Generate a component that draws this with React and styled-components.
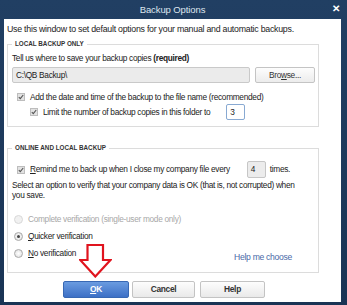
import React from 'react';
import styled, { createGlobalStyle } from 'styled-components';

const Global = createGlobalStyle`
  body {
    margin: 0;
    background: #1b3556;
    font-family: "Liberation Sans", Arial, sans-serif;
  }
`;

const Window = styled.div`
  position: relative;
  width: 347px;
  height: 305px;
  box-sizing: border-box;
  background: linear-gradient(#213f63, #1a3455);
  padding: 0 6px 3px 4px;
  display: flex;
  flex-direction: column;
`;

const TitleBar = styled.div`
  height: 19px;
  flex: none;
  display: flex;
  align-items: center;
  justify-content: center;
  position: relative;
  color: #dde5ee;
  font-size: 9.5px;
  letter-spacing: -0.1px;
`;

const Close = styled.span`
  position: absolute;
  right: 1px;
  top: 3px;
  color: #fff;
  font-weight: bold;
  font-size: 10px;
`;

const Body = styled.div`
  flex: 1;
  background: #fff;
  padding: 4px 0 0 3px;
  font-size: 8.3px;
  letter-spacing: -0.3px;
  color: #222;
`;

const Intro = styled.div`
  height: 12px;
  line-height: 12px;
  font-size: 8.8px;
  letter-spacing: -0.25px;
  white-space: nowrap;
`;

const Line = styled.div`
  height: ${p => p.h || 12}px;
  line-height: ${p => p.h || 12}px;
  display: flex;
  align-items: center;
  margin-top: ${p => p.mt || 0}px;
  padding-left: ${p => p.indent || 0}px;
  color: ${p => (p.muted ? '#a8a8a8' : '#222')};
  white-space: nowrap;
`;

const Group = styled.fieldset`
  width: 312px;
  box-sizing: border-box;
  margin: ${p => p.mt || 0}px 0 0 0;
  padding: 0 0 0 4px;
  border: 1px solid #dcdcdc;
  height: ${p => p.h}px;
`;

const Legend = styled.legend`
  font-size: 6.3px;
  font-weight: bold;
  letter-spacing: 0;
  color: #333;
  padding: 0 3px;
  margin-left: 0;
  line-height: 8px;
`;

const PathRow = styled.div`
  display: flex;
  gap: 5px;
  margin-top: 3px;
  height: 16px;
`;

const PathInput = styled.div`
  width: 238px;
  box-sizing: border-box;
  height: 16px;
  background: #ebebeb;
  border: 1px solid #c9c9c9;
  border-radius: 2px;
  padding-left: 3px;
  line-height: 14px;
`;

const Browse = styled.div`
  width: 60px;
  box-sizing: border-box;
  height: 16px;
  border: 1px solid #c4c4c4;
  border-radius: 2px;
  background: linear-gradient(#fdfdfd, #ececec);
  text-align: center;
  line-height: 14px;
  color: #333;
`;

const Check = styled.span`
  width: 8px;
  height: 8px;
  box-sizing: border-box;
  border: 1px solid #bdbdbd;
  background: #e2e2e2;
  margin-right: 5px;
  display: inline-flex;
  align-items: center;
  justify-content: center;
  flex: none;
`;

const Radio = styled.span`
  width: 9px;
  height: 9px;
  box-sizing: border-box;
  border-radius: 50%;
  border: 1px solid ${p => (p.muted ? '#d8d8d8' : '#a9a9a9')};
  background: ${p => (p.muted ? '#f1f1f1' : 'radial-gradient(#fff, #dcdcdc)')};
  margin-right: 5px;
  display: inline-flex;
  align-items: center;
  justify-content: center;
  flex: none;
  &::after {
    content: '';
    display: ${p => (p.on ? 'block' : 'none')};
    width: 3px;
    height: 3px;
    border-radius: 50%;
    background: #444;
  }
`;

const NumBox = styled.span`
  width: ${p => p.w || 19}px;
  height: ${p => p.hh || 16}px;
  box-sizing: border-box;
  border: 1px solid ${p => (p.blue ? '#88a9d2' : '#c6c6c6')};
  background: ${p => (p.blue ? '#fff' : '#ececec')};
  border-radius: 2px;
  padding-left: 3px;
  line-height: ${p => (p.hh || 16) - 2}px;
  margin-left: ${p => p.ml}px;
  margin-right: ${p => p.mr || 0}px;
`;

const HelpLink = styled.span`
  margin-left: auto;
  margin-right: 26px;
  margin-top: 8px;
  color: #4a6aa8;
  font-size: 8.6px;
`;

const Buttons = styled.div`
  display: flex;
  gap: 3px;
  margin: 8px 0 0 56px;
`;

const Button = styled.div`
  width: ${p => p.w}px;
  height: 17px;
  box-sizing: border-box;
  border-radius: 2px;
  border: 1px solid ${p => (p.primary ? '#3868b4' : '#c3c3c3')};
  background: ${p =>
    p.primary ? 'linear-gradient(#6a9be0, #3d70c6)' : 'linear-gradient(#fdfdfd, #e9e9e9)'};
  color: ${p => (p.primary ? '#fff' : '#333')};
  font-weight: bold;
  font-size: 8.4px;
  text-align: center;
  line-height: 15px;
  margin-left: ${p => p.ml || 0}px;
`;

const Arrow = styled.svg`
  position: absolute;
  left: 79px;
  top: 244px;
`;

const Tick = () => (
  <svg width="6" height="6" viewBox="0 0 6 6">
    <path d="M0.8 3.2 L2.3 4.7 L5.2 1" stroke="#555" strokeWidth="1.1" fill="none" />
  </svg>
);

export default function App() {
  return (
    <>
      <Global />
      <Window>
        <TitleBar>
          Backup Options
          <Close>✕</Close>
        </TitleBar>
        <Body>
          <Intro>Use this window to set default options for your manual and automatic backups.</Intro>
          <Group mt={5} h={87}>
            <Legend>LOCAL BACKUP ONLY</Legend>
            <Line mt={4}>
              Tell us where to save your backup copies&nbsp;<b>(required)</b>
            </Line>
            <PathRow>
              <PathInput>C:\QB Backup\</PathInput>
              <Browse>
                Bro<u>w</u>se...
              </Browse>
            </PathRow>
            <Line mt={8} indent={5}>
              <Check><Tick /></Check>
              Add the date and time of the backup to the file name (recommended)
            </Line>
            <Line mt={1} h={16} indent={18}>
              <Check><Tick /></Check>
              Limit the number of backup copies in this folder to
              <NumBox blue ml={16}>3</NumBox>
            </Line>
          </Group>
          <Group mt={17} h={129}>
            <Legend>ONLINE AND LOCAL BACKUP</Legend>
            <Line mt={9} h={17} indent={5}>
              <Check><Tick /></Check>
              <span>
                <u>R</u>emind me to back up when I close my company file every
              </span>
              <NumBox ml={17} mr={4} w={19} hh={17}>4</NumBox>
              times.
            </Line>
            <Line mt={2} h={10}>
              Select an option to verify that your company data is OK (that is, not corrupted) when
            </Line>
            <Line h={10}>you save.</Line>
            <Line mt={13} h={12} indent={2} muted>
              <Radio muted />
              Complete verification (single-user mode only)
            </Line>
            <Line mt={5} h={12} indent={2}>
              <Radio on />
              <span>
                <u>Q</u>uicker verification
              </span>
            </Line>
            <Line mt={5} h={12} indent={2}>
              <Radio />
              <span>
                <u>N</u>o verification
              </span>
              <HelpLink>Help me choose</HelpLink>
            </Line>
          </Group>
          <Buttons>
            <Button primary w={66}>
              <u>O</u>K
            </Button>
            <Button w={63}>Cancel</Button>
            <Button w={65} ml={2}>Help</Button>
          </Buttons>
        </Body>
        <Arrow width="33" height="34" viewBox="0 0 33 34">
          <path
            d="M8.5 1 H24 V16 H31.5 L16.3 32.5 L1.2 16 H8.5 Z"
            fill="#fff"
            stroke="#e0141e"
            strokeWidth="2.2"
            strokeLinejoin="miter"
          />
        </Arrow>
      </Window>
    </>
  );
}
